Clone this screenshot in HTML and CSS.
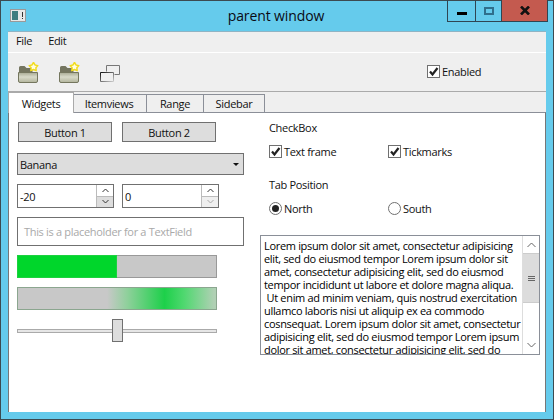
FILE: index.html
```html
<!DOCTYPE html>
<html lang="en">
<head>
    <meta charset="UTF-8">
    <meta name="viewport" content="width=device-width, initial-scale=1.0">
    <title>parent window</title>
    <link rel="stylesheet" href="styles.css">
</head>
<body>
    <div class="window">
        <div class="titlebar">
            <svg class="app-icon" width="16" height="13" viewBox="0 0 16 13">
                <rect x="0.5" y="0.5" width="15" height="12" fill="#e8e8e8" stroke="#9a9a9a"/>
                <rect x="2" y="2" width="6" height="9" fill="#3f7d80"/>
                <rect x="12" y="3" width="1" height="5" fill="#333"/>
                <rect x="12" y="9" width="1" height="1" fill="#333"/>
            </svg>
            <div class="title">parent window</div>
            <div class="controls">
                <div class="ctl ctl-min"><span class="min-bar"></span></div>
                <div class="ctl ctl-max"><span class="max-box"></span></div>
                <div class="ctl ctl-close">
                    <svg width="10" height="9" viewBox="0 0 10 9"><path d="M1 0.500 L9 8.500 M9 0.500 L1 8.500" stroke="#111" stroke-width="2.600" fill="none"/></svg>
                </div>
            </div>
        </div>
        <div class="client">
            <div class="menubar">
                <span class="menu-item">File</span>
                <span class="menu-item">Edit</span>
            </div>
            <div class="toolbar">
                <svg class="tool" width="21" height="21" viewBox="0 0 21 21">
                    <defs>
                        <linearGradient id="folder" x1="0" y1="0" x2="0" y2="1">
                            <stop offset="0" stop-color="#a9ab94"/>
                            <stop offset="0.450" stop-color="#d8dac9"/>
                            <stop offset="1" stop-color="#b2b49c"/>
                        </linearGradient>
                    </defs>
                    <path d="M1 5.500 q0 -1.500 1.500 -1.500 h4 l2 2 h6 v5 H1z" fill="#74755f"/>
                    <path d="M0.500 10.500 h19 v8.500 q0 1.500 -1.500 1.500 h-16 q-1.500 0 -1.500 -1.500z" fill="url(#folder)" stroke="#74765e"/>
                    <polygon points="15.500,0.500 16.970,2.980 19.780,3.610 17.880,5.770 18.150,8.640 15.500,7.500 12.850,8.640 13.120,5.770 11.220,3.610 14.030,2.980" fill="#fffde4" stroke="#f2dc1e" stroke-width="1.500" stroke-linejoin="round"/>
                </svg>
                <svg class="tool" width="21" height="21" viewBox="0 0 21 21">
                    <path d="M1 5.500 q0 -1.500 1.500 -1.500 h4 l2 2 h6 v5 H1z" fill="#74755f"/>
                    <path d="M0.500 10.500 h19 v8.500 q0 1.500 -1.500 1.500 h-16 q-1.500 0 -1.500 -1.500z" fill="url(#folder)" stroke="#74765e"/>
                    <polygon points="15.500,0.500 16.970,2.980 19.780,3.610 17.880,5.770 18.150,8.640 15.500,7.500 12.850,8.640 13.120,5.770 11.220,3.610 14.030,2.980" fill="#fffde4" stroke="#f2dc1e" stroke-width="1.500" stroke-linejoin="round"/>
                </svg>
                <svg class="tool tool-win" width="21" height="18" viewBox="0 0 21 18">
                    <defs>
                        <linearGradient id="fade" x1="0" y1="0" x2="1" y2="1">
                            <stop offset="0" stop-color="#111"/>
                            <stop offset="1" stop-color="#ccc"/>
                        </linearGradient>
                    </defs>
                    <path d="M6.500 6.500 V0.500 H19.500 V9.500 H14.500" fill="none" stroke="#777"/>
                    <path d="M0.500 7.500 H13.500 V16.500 H0.500z" fill="none" stroke="url(#fade)"/>
                </svg>
                <label class="check check-enabled"><span class="box"></span>Enabled</label>
            </div>
            <div class="tabbar">
                <div class="tab tab-active">Widgets</div>
                <div class="tab tab-items">Itemviews</div>
                <div class="tab tab-range">Range</div>
                <div class="tab tab-side">Sidebar</div>
            </div>
            <div class="pane">
                <div class="col-left">
                    <div class="btn-row">
                        <div class="btn">Button 1</div>
                        <div class="btn">Button 2</div>
                    </div>
                    <div class="combo"><span>Banana</span><span class="combo-arrow"></span></div>
                    <div class="spin-row">
                        <div class="spin">
                            <span class="spin-val">-20</span>
                            <div class="spin-btns">
                                <div class="spin-btn"><svg width="7" height="5" viewBox="0 0 7 5"><path d="M0.500 4 L3.500 1 L6.500 4" fill="none" stroke="#333"/></svg></div>
                                <div class="spin-btn"><svg width="7" height="5" viewBox="0 0 7 5"><path d="M0.500 1 L3.500 4 L6.500 1" fill="none" stroke="#333"/></svg></div>
                            </div>
                        </div>
                        <div class="spin">
                            <span class="spin-val">0</span>
                            <div class="spin-btns">
                                <div class="spin-btn"><svg width="7" height="5" viewBox="0 0 7 5"><path d="M0.500 4 L3.500 1 L6.500 4" fill="none" stroke="#333"/></svg></div>
                                <div class="spin-btn spin-off"><svg width="7" height="5" viewBox="0 0 7 5"><path d="M0.500 1 L3.500 4 L6.500 1" fill="none" stroke="#aaa"/></svg></div>
                            </div>
                        </div>
                    </div>
                    <div class="field">This is a placeholder for a TextField</div>
                    <div class="progress"><div class="progress-fill"></div></div>
                    <div class="progress progress-busy"></div>
                    <div class="slider"><div class="slider-track"></div><div class="slider-handle"></div></div>
                </div>
                <div class="col-right">
                    <div class="group-label">CheckBox</div>
                    <div class="opt-row">
                        <label class="check"><span class="box"></span>Text frame</label>
                        <label class="check"><span class="box"></span>Tickmarks</label>
                    </div>
                    <div class="group-label group-tab">Tab Position</div>
                    <div class="opt-row">
                        <label class="check"><span class="radio radio-on"></span>North</label>
                        <label class="check"><span class="radio"></span>South</label>
                    </div>
                    <div class="textarea">
                        <div class="textarea-text">Lorem ipsum dolor sit amet, consectetur adipisicing<br>elit, sed do eiusmod tempor Lorem ipsum dolor sit<br>amet, consectetur adipisicing elit, sed do eiusmod<br>tempor incididunt ut labore et dolore magna aliqua.<br>&nbsp;Ut enim ad minim veniam, quis nostrud exercitation<br>ullamco laboris nisi ut aliquip ex ea commodo<br>cosnsequat. Lorem ipsum dolor sit amet, consectetur<br>adipisicing elit, sed do eiusmod tempor Lorem ipsum<br>dolor sit amet, consectetur adipisicing elit, sed do</div>
                        <div class="scrollbar">
                            <div class="sb-btn"><svg width="9" height="6" viewBox="0 0 9 6"><path d="M0.500 5 L4.500 1 L8.500 5" fill="none" stroke="#666"/></svg></div>
                            <div class="sb-thumb"><span class="grip"></span><span class="grip"></span><span class="grip"></span></div>
                            <div class="sb-space"></div>
                            <div class="sb-btn"><svg width="9" height="6" viewBox="0 0 9 6"><path d="M0.500 1 L4.500 5 L8.500 1" fill="none" stroke="#666"/></svg></div>
                        </div>
                    </div>
                </div>
            </div>
        </div>
    </div>
</body>
</html>
```

FILE: styles.css
```css
* {
    box-sizing: border-box;
}

body {
    margin: 0;
    font-family: "Open Sans", "Noto Sans", sans-serif;
    font-size: 11px;
    letter-spacing: -0.320px;
    color: #111;
}

.window {
    width: 554px;
    height: 420px;
    background-color: #65cbec;
    border: 1px solid #3c4a50;
    padding: 0 7px 7px 7px;
    display: flex;
    flex-direction: column;
}

.titlebar {
    height: 30px;
    display: flex;
    align-items: flex-start;
    position: relative;
}

.app-icon {
    margin: 8px 0 0 2px;
}

.title {
    position: absolute;
    left: 0;
    right: 0;
    top: 5px;
    padding-right: 2px;
    text-align: center;
    font-size: 14px;
    letter-spacing: -0.100px;
    line-height: 20px;
    color: #0a0a14;
}

.controls {
    position: absolute;
    top: -1px;
    right: -2px;
    width: 101px;
    height: 22px;
    display: flex;
    border: 1px solid #2f4552;
    border-top: 0;
}

.ctl {
    display: flex;
    align-items: center;
    justify-content: center;
    border-right: 1px solid #2f4552;
}

.ctl-min {
    width: 28px;
}

.ctl-max {
    width: 26px;
}

.ctl-close {
    flex: 1;
    background-color: #c45a4f;
    border-right: 0;
}

.min-bar {
    width: 10px;
    height: 3px;
    margin-top: 5px;
    background-color: #000;
}

.max-box {
    width: 10px;
    height: 8px;
    border: 2px solid #2f6f8c;
}

.client {
    flex: 1;
    background-color: #efefef;
    display: flex;
    flex-direction: column;
    border-top: 1px solid #8fb4c4;
    min-height: 0;
}

.menubar {
    height: 21px;
    display: flex;
    align-items: center;
    padding: 0 0 3px 8px;
    gap: 16px;
    border-bottom: 1px solid #fff;
}

.toolbar {
    height: 39px;
    display: flex;
    align-items: center;
    padding-left: 10px;
    border-bottom: 1px solid #aaa;
}

.tool {
    margin-right: 20px;
}

.tool-win {
    margin-top: 3px;
}

.check {
    display: flex;
    align-items: center;
    gap: 2px;
}

.check-enabled {
    margin: -2px 0 0 286px;
}

.box {
    width: 13px;
    height: 13px;
    border: 1px solid #707070;
    background: #fff url("data:image/svg+xml,%3Csvg xmlns='http://www.w3.org/2000/svg' width='11' height='11'%3E%3Cpath d='M2 5.500 L4.500 8.500 L9.500 2' fill='none' stroke='%23222' stroke-width='2.200'/%3E%3C/svg%3E") center no-repeat;
}

.radio {
    width: 13px;
    height: 13px;
    border: 1px solid #707070;
    border-radius: 50%;
    background-color: #fff;
    display: flex;
    align-items: center;
    justify-content: center;
}

.radio-on::after {
    content: "";
    width: 7px;
    height: 7px;
    border-radius: 50%;
    background-color: #222;
}

.tabbar {
    height: 20px;
    display: flex;
    align-items: flex-end;
}

.tab {
    height: 18px;
    border: 1px solid #8b8f98;
    border-left: 0;
    border-bottom: 0;
    background-color: #efefef;
    display: flex;
    align-items: center;
    justify-content: center;
}

.tab-active {
    width: 66px;
    height: 21px;
    margin-bottom: -1px;
    background-color: #fff;
    border: 1px solid #aaa;
    border-bottom: 0;
    position: relative;
    z-index: 1;
}

.tab-items {
    width: 73px;
    padding-right: 2px;
}

.tab-range {
    width: 57px;
}

.tab-side {
    width: 61px;
}

.pane {
    flex: 1;
    background-color: #fff;
    border-top: 1px solid #8b8f98;
    border-left: 1px solid #777;
    border-right: 1px solid #777;
    display: grid;
    grid-template-columns: 243px 1fr;
    padding-left: 8px;
    padding-right: 5px;
}

.col-left {
    display: flex;
    flex-direction: column;
    gap: 9px;
    padding-top: 9px;
}

.btn-row {
    display: flex;
    gap: 10px;
    padding-left: 1px;
    margin-bottom: 2px;
}

.btn {
    width: 94px;
    height: 20px;
    border: 1px solid #707070;
    background-color: #dddddd;
    display: flex;
    align-items: center;
    justify-content: center;
}

.combo {
    width: 227px;
    height: 22px;
    border: 1px solid #707070;
    background-color: #dddddd;
    display: flex;
    align-items: center;
    justify-content: space-between;
    padding: 0 4px 0 2px;
}

.combo-arrow {
    border-left: 3px solid transparent;
    border-right: 3px solid transparent;
    border-top: 3px solid #111;
}

.spin-row {
    display: flex;
    gap: 8px;
}

.spin {
    width: 97px;
    height: 24px;
    border: 1px solid #707070;
    background-color: #fff;
    display: flex;
    align-items: center;
    justify-content: space-between;
    padding-left: 2px;
}

.spin-btns {
    width: 17px;
    height: 22px;
    display: flex;
    flex-direction: column;
    border-left: 1px solid #bbb;
}

.spin-btn {
    flex: 1;
    display: flex;
    align-items: center;
    justify-content: center;
}

.spin-btn + .spin-btn {
    background-color: #dddddd;
    border-top: 1px solid #bbb;
}

.spin-btn + .spin-off {
    background-color: #efefef;
}

.field {
    width: 227px;
    height: 29px;
    border: 1px solid #707070;
    display: flex;
    align-items: center;
    padding-left: 6px;
    color: #a9a9a9;
}

.progress {
    width: 200px;
    height: 23px;
    border: 1px solid #999;
    background-color: #c8c8c8;
}

.progress-fill {
    width: 98px;
    height: 100%;
    background-color: #00d62b;
    outline: 1px solid #1cd13f;
}

.progress-busy {
    border-color: #8ba68f;
    background: linear-gradient(90deg, #c8c8c8 45%, #90d09c 55%, #1dd04a 74%, #50d870 84%, #b0d0b4 99%);
}

.slider {
    width: 200px;
    height: 23px;
    display: flex;
    align-items: center;
    position: relative;
}

.slider-track {
    width: 100%;
    height: 4px;
    background-color: #e6e6e6;
    border: 1px solid #aaa;
}

.slider-handle {
    position: absolute;
    left: 95px;
    top: 0;
    width: 11px;
    height: 23px;
    background-color: #dddddd;
    border: 1px solid #707070;
}

.col-right {
    padding-top: 8px;
    display: flex;
    flex-direction: column;
    min-width: 0;
}

.group-label {
    padding-left: 9px;
    height: 14px;
    line-height: 14px;
}

.group-tab {
    margin-top: 20px;
}

.opt-row {
    display: grid;
    grid-template-columns: 119px 1fr;
    padding-left: 9px;
    margin-top: 9px;
    height: 14px;
}

.textarea {
    width: 280px;
    height: 120px;
    margin-top: 20px;
    border: 1px solid #8a8f98;
    display: flex;
    overflow: hidden;
}

.textarea-text {
    flex: 1;
    padding: 3px 0 0 3px;
    line-height: 13px;
    white-space: nowrap;
    overflow: hidden;
    color: #000;
}

.scrollbar {
    width: 17px;
    display: flex;
    flex-direction: column;
    border-left: 1px solid #ddd;
    padding: 1px 0;
}

.sb-btn {
    height: 16px;
    display: flex;
    align-items: center;
    justify-content: center;
}

.sb-thumb {
    height: 50px;
    background-color: #dcdcdc;
    border-top: 1px solid #ccc;
    border-bottom: 1px solid #ccc;
    display: flex;
    flex-direction: column;
    align-items: center;
    justify-content: center;
    gap: 1px;
}

.grip {
    width: 7px;
    height: 1px;
    background-color: #666;
}

.sb-space {
    flex: 1;
}
```
